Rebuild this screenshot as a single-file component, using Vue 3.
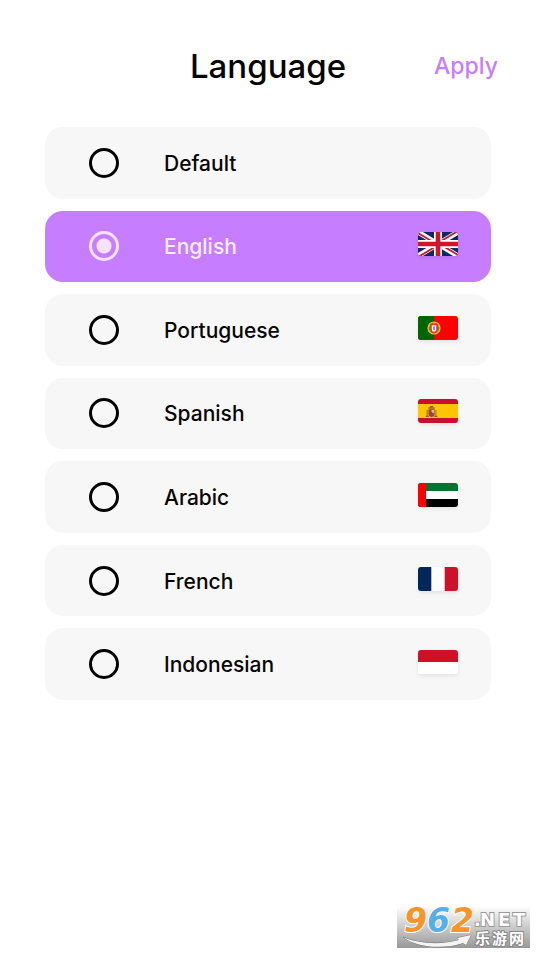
<script setup>
import { ref } from 'vue'

const selected = ref('en')
const languages = [
  { id: 'default', name: 'Default' },
  { id: 'en', name: 'English', flag: 'gb' },
  { id: 'pt', name: 'Portuguese', flag: 'pt' },
  { id: 'es', name: 'Spanish', flag: 'es' },
  { id: 'ar', name: 'Arabic', flag: 'ae' },
  { id: 'fr', name: 'French', flag: 'fr' },
  { id: 'id', name: 'Indonesian', flag: 'id' }
]
</script>

<template>
  <main class="page">
    <header class="header">
      <h1 class="title">Language</h1>
      <button class="apply" type="button">Apply</button>
    </header>

    <div class="list" role="radiogroup" aria-label="Language">
      <label
        v-for="lang in languages"
        :key="lang.id"
        class="row"
        :class="{ active: selected === lang.id }"
      >
        <input v-model="selected" class="radio" type="radio" name="language" :value="lang.id" />
        <span class="name">{{ lang.name }}</span>
        <svg v-if="lang.flag" class="flag" viewBox="0 0 40 24" aria-hidden="true">
          <g v-if="lang.flag === 'gb'">
            <path fill="#0a2a66" d="M0 0h40v24H0z" />
            <path stroke="#fff" stroke-width="5" d="M0 0l40 24M40 0L0 24" />
            <path fill="#d0142c" d="M0 0l16 9.600h-3.500L0 2zM40 0L24 9.600h-3.500L36.500 0zM40 24l-16-9.600h3.500L40 22zM0 24l16-9.600h3.500L3.500 24z" />
            <path fill="#fff" d="M16 0h8v24h-8zM0 8h40v8H0z" />
            <path fill="#d0142c" d="M17.700 0h4.600v24h-4.600zM0 9.700h40v4.600H0z" />
          </g>
          <g v-else-if="lang.flag === 'pt'">
            <path fill="#f00" d="M0 0h40v24H0z" />
            <path fill="#006600" d="M0 0h16v24H0z" />
            <circle cx="16" cy="12" r="6" fill="#8a7a1c" stroke="#e8c52e" stroke-width="1.200" />
            <path fill="none" stroke="#e8d52e" stroke-width=".8" d="M10.500 10c4 0 8 3 10 6M21.500 10c-4 0-8 3-10 6M16 6v12" />
            <path fill="#f5f3f7" stroke="#e33232" stroke-width="1.500" d="M13 8.500h6v5c0 4-6 4-6 0z" />
            <path fill="#7f93c4" d="M15 10.500h2v3.500h-2z" />
          </g>
          <g v-else-if="lang.flag === 'es'">
            <path fill="#c8102e" d="M0 0h40v24H0z" />
            <path fill="#ffc400" d="M0 5h40v14H0z" />
            <path fill="#b77a20" d="M8.500 11h1.300v7H8.500zM17.200 11h1.300v7h-1.300zM10 9c1-2 6-2 7 0l-1 2h-5z" />
            <path fill="#a34430" d="M10.400 10.500h6.200v4.500c0 4-6.200 4-6.200 0z" />
            <path fill="#d6b7a0" d="M13.500 11h2.500v3h-2.500z" />
            <circle cx="13.500" cy="14" r="1" fill="#4b5580" />
            <path fill="#8e5740" d="M12 7h3v1.500h-3zM7.800 16.800h3v1.200h-3zM16.300 16.800h3v1.200h-3z" />
          </g>
          <g v-else-if="lang.flag === 'ae'">
            <path fill="#00732f" d="M0 0h40v8H0z" />
            <path fill="#fff" d="M0 8h40v8H0z" />
            <path fill="#000" d="M0 16h40v8H0z" />
            <path fill="#f00" d="M0 0h8v24H0z" />
          </g>
          <g v-else-if="lang.flag === 'fr'">
            <path fill="#00265a" d="M0 0h14v24H0z" />
            <path fill="#fff" d="M13.300 0h13.400v24H13.300z" />
            <path fill="#ce1126" d="M26.700 0H40v24H26.700z" />
          </g>
          <g v-else>
            <path fill="#ce1126" d="M0 0h40v12H0z" />
            <path fill="#fff" d="M0 12h40v12H0z" />
          </g>
        </svg>
      </label>
    </div>

    <footer class="footer">
      <svg class="mark" viewBox="0 0 133 42" role="img" aria-label="962.NET 乐游网">
        <defs>
          <linearGradient id="mark-bg" x1="0" y1="0" x2="0" y2="1">
            <stop offset="0" stop-color="#fff" />
            <stop offset="1" stop-color="#989898" />
          </linearGradient>
        </defs>
        <path fill="url(#mark-bg)" d="M0 0h133v42H0z" />
        <path
          class="swoosh"
          d="M6 31c15 7 39 8 56 3l-2-2 14-3-5 10-3-2c-21 7-48 4-60-6z"
        />
        <g class="digits">
          <text x="7" y="26" fill="#f7942a">9</text>
          <text x="30" y="26" fill="#57aee8">6</text>
          <text x="54" y="26" fill="#f7942a">2</text>
        </g>
        <text class="net" x="77 83 101 116" y="20">.NET</text>
        <text class="cn" x="78 95 112" y="38">乐游网</text>
      </svg>
    </footer>
  </main>
</template>

<style>
body {
  margin: 0;
  background: #fff;
}
</style>

<style scoped>
.page {
  display: flex;
  flex-direction: column;
  box-sizing: border-box;
  min-height: 100vh;
  padding-top: 42px;
  font-family: Inter, "Noto Sans CJK SC", sans-serif;
  color: #050505;
}
.header {
  display: grid;
  grid-template-columns: 1fr auto 1fr;
  align-items: center;
  height: 48px;
  padding: 0 38px;
}
.title {
  grid-column: 2;
  margin: 0;
  font-size: 33px;
  font-weight: 500;
  line-height: 48px;
}
.apply {
  justify-self: end;
  padding: 0;
  border: 0;
  background: none;
  color: #c77dff;
  font: inherit;
  font-size: 23px;
  font-weight: 500;
  line-height: 48px;
  cursor: pointer;
}
.list {
  display: grid;
  grid-auto-rows: 1fr;
  gap: 12px;
  min-height: 573px;
  margin: 37px 45px 0;
}
.row {
  display: flex;
  align-items: center;
  gap: 45px;
  padding: 0 33px 0 44px;
  border-radius: 18px;
  background: #f7f7f7;
  cursor: pointer;
}
.row.active {
  background: #c77dff;
  color: #f9edff;
}
.radio {
  appearance: none;
  flex: none;
  box-sizing: border-box;
  width: 30px;
  height: 30px;
  margin: 0;
  border: 3px solid currentColor;
  border-radius: 50%;
}
.active .radio {
  border-color: #f4e2ff;
  background: radial-gradient(circle, #f4e2ff 7px, transparent 8px);
}
.name {
  flex: 1;
  padding-top: 2px;
  font-size: 21px;
  font-weight: 500;
  line-height: 30px;
}
.flag {
  flex: none;
  width: 40px;
  height: 24px;
  margin-bottom: 4px;
  border-radius: 3px;
  box-shadow: 0 2px 4px rgba(0, 0, 0, 0.08);
}
.footer {
  display: flex;
  justify-content: flex-end;
  margin-top: auto;
  padding: 24px 6px 6px;
}
.mark {
  width: 133px;
  height: 42px;
  overflow: visible;
}
.swoosh {
  fill: #f4f4f4;
  stroke: #777;
  stroke-width: 1px;
  paint-order: stroke;
}
.digits {
  font: italic bold 33px "DejaVu Sans", sans-serif;
  stroke: #fff;
  stroke-width: 2px;
  paint-order: stroke;
}
.net {
  font: bold 18px "DejaVu Sans", sans-serif;
  fill: #fff;
  stroke: #999;
  stroke-width: 2px;
  paint-order: stroke;
}
.cn {
  font: bold 15px "Noto Sans CJK SC", sans-serif;
  fill: #fff;
  stroke: #888;
  stroke-width: 2px;
  paint-order: stroke;
}
</style>
